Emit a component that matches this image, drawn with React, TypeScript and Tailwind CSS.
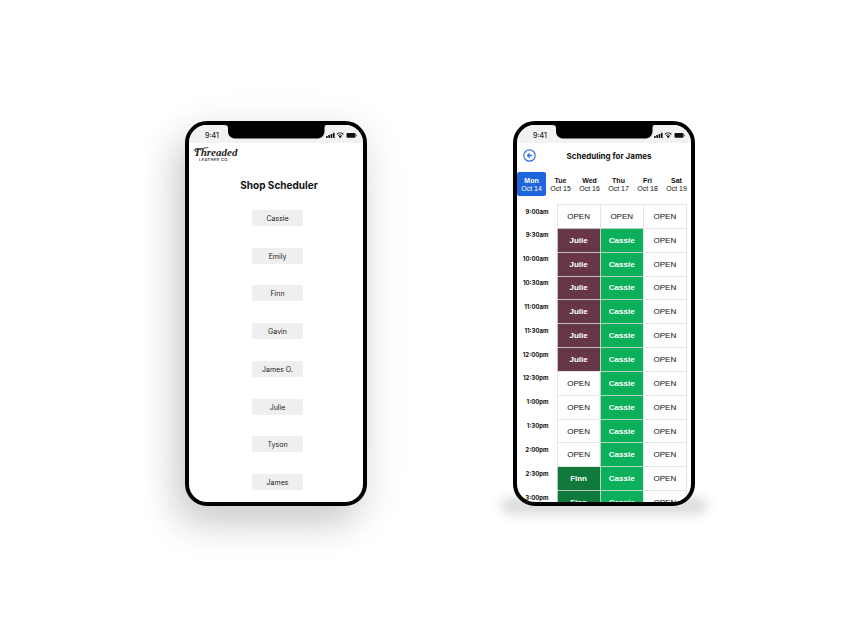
import type { ReactNode } from "react";

const staff = ["Cassie", "Emily", "Finn", "Gavin", "James O.", "Julie", "Tyson", "James"];

const days = [
  { day: "Mon", date: "Oct 14" },
  { day: "Tue", date: "Oct 15" },
  { day: "Wed", date: "Oct 16" },
  { day: "Thu", date: "Oct 17" },
  { day: "Fri", date: "Oct 18" },
  { day: "Sat", date: "Oct 19" },
];

const slots: [string, string[]][] = [
  ["9:00am", ["OPEN", "OPEN", "OPEN"]],
  ["9:30am", ["Julie", "Cassie", "OPEN"]],
  ["10:00am", ["Julie", "Cassie", "OPEN"]],
  ["10:30am", ["Julie", "Cassie", "OPEN"]],
  ["11:00am", ["Julie", "Cassie", "OPEN"]],
  ["11:30am", ["Julie", "Cassie", "OPEN"]],
  ["12:00pm", ["Julie", "Cassie", "OPEN"]],
  ["12:30pm", ["OPEN", "Cassie", "OPEN"]],
  ["1:00pm", ["OPEN", "Cassie", "OPEN"]],
  ["1:30pm", ["OPEN", "Cassie", "OPEN"]],
  ["2:00pm", ["OPEN", "Cassie", "OPEN"]],
  ["2:30pm", ["Finn", "Cassie", "OPEN"]],
  ["3:00pm", ["Finn", "Cassie", "OPEN"]],
];

const slotStyles: Record<string, string> = {
  OPEN: "text-[#111111]",
  Julie: "bg-[#673748] font-bold text-white",
  Cassie: "bg-[#0cb05a] font-bold text-white",
  Finn: "bg-[#107a3c] font-bold text-white",
};

function StatusBar() {
  return (
    <div className="relative flex h-[18px] shrink-0 items-center justify-between bg-[#f2f2f2] pt-[3px] pr-[6px] pl-4">
      <span className="text-[7px] leading-[8px] font-medium text-[#222222]">9:41</span>
      <svg className="absolute top-0 left-[35px]" width="103" height="14" viewBox="0 0 103 14" aria-hidden="true">
        <path d="M0 0H103C101 0 100.500 1 100.500 3V6C100.500 11 97 13.500 93 13.500H12C7 13.500 4 11 4 6V3C4 1 3 0 0 0Z" fill="#000" />
      </svg>
      <svg width="31" height="7" viewBox="0 0 31 7" aria-hidden="true">
        <g fill="#111">
          <rect x="0" y="4" width="1.700" height="2" rx="0.400" />
          <rect x="2.300" y="3" width="1.700" height="3" rx="0.400" />
          <rect x="4.600" y="1.900" width="1.700" height="4.100" rx="0.400" />
          <rect x="6.900" y="0.700" width="1.700" height="5.300" rx="0.400" />
          <rect x="20.500" y="1" width="9" height="4.800" rx="1" />
          <rect x="29.900" y="2.500" width="0.600" height="1.800" rx="0.300" />
          <path d="M12.700 4.500L14.200 6.200L15.700 4.500A2.200 2.200 0 0 0 12.700 4.500Z" />
        </g>
        <g fill="none" stroke="#111" strokeWidth="1.100">
          <path d="M10.900 2.300A4.900 4.900 0 0 1 17.500 2.300" />
          <path d="M12.100 3.700A3.100 3.100 0 0 1 16.300 3.700" strokeWidth="0.800" />
        </g>
      </svg>
    </div>
  );
}

function Phone({ children, className = "" }: { children: ReactNode; className?: string }) {
  return (
    <div className={`relative h-[385px] w-[182px] rounded-[22px] border-4 border-black bg-black ${className}`}>
      <div className="flex h-full flex-col overflow-hidden rounded-[18px] bg-white">
        <StatusBar />
        {children}
      </div>
    </div>
  );
}

function Logo() {
  return (
    <a href="#home" className="relative block w-[43px] text-[#1c1c1c]">
      <span className="block font-['Liberation_Serif',serif] text-[11px] leading-[12px] font-bold italic">Threaded</span>
      <svg className="absolute top-0 left-0" width="43" height="12" viewBox="0 0 43 12" fill="none" stroke="currentColor" strokeWidth="0.800" strokeLinecap="round" aria-hidden="true">
        <path d="M2.500 5.500C0 5.800 0 3 2.500 2.500H8L14 1.500" />
      </svg>
      <span className="block pl-[5px] text-[4px] leading-[4px] font-medium tracking-widest whitespace-nowrap">LEATHER CO.</span>
    </a>
  );
}

function ShopScheduler() {
  return (
    <Phone className="shadow-[-10px_18px_36px_rgba(0,0,0,0.17),0_8px_50px_rgba(0,0,0,0.07)]">
      <div className="pt-[3px] pl-[5px]">
        <Logo />
      </div>
      <h1 className="mt-4 pl-[6px] text-center text-[10px] leading-[14px] font-bold text-[#111111]">Shop Scheduler</h1>
      <div className="mt-[18px] flex flex-1 flex-col items-center justify-between pb-3 pl-[3px]">
        {staff.map((name) => (
          <button key={name} type="button" className="h-4 w-[51px] rounded-[2px] bg-[#efefef] pt-px text-[7px] leading-[16px] text-[#222222]">
            {name}
          </button>
        ))}
      </div>
    </Phone>
  );
}

function DaySchedule() {
  return (
    <Phone>
      <header className="flex h-[25px] shrink-0 items-center pl-[6px]">
        <button type="button" aria-label="Back" className="text-[#2f74e8]">
          <svg width="13" height="13" viewBox="0 0 13 13" fill="none" stroke="currentColor" strokeLinecap="round" strokeLinejoin="round">
            <circle cx="6.500" cy="6.500" r="5.700" strokeWidth="1.200" />
            <path d="M8.700 6.500H4.500M6.200 4.800L4.500 6.500L6.200 8.200" strokeWidth="1.300" />
          </svg>
        </button>
        <h2 className="flex-1 pr-4 pl-[7px] text-center text-[8px] leading-[12px] font-bold whitespace-nowrap text-[#111111]">Scheduling for James</h2>
      </header>
      <nav className="mt-1 grid shrink-0 grid-cols-6">
        {days.map(({ day, date }, i) => (
          <button
            key={day}
            type="button"
            className={`flex h-6 flex-col items-center justify-center rounded-[2px] pt-px font-['Liberation_Sans',sans-serif] text-[7px] leading-[8px] whitespace-nowrap ${i === 0 ? "bg-[#1f66dd] text-white" : "text-[#111111]"}`}
          >
            <span className="font-bold">{day}</span>
            <span>{date}</span>
          </button>
        ))}
      </nav>
      <div className="mt-2 min-h-0 flex-1 overflow-hidden pr-1">
        <table className="h-[311px] w-full table-fixed border-collapse">
          <colgroup>
            <col className="w-10" />
            <col />
            <col />
            <col />
          </colgroup>
          <tbody>
            {slots.map(([time, names]) => (
              <tr key={time}>
                <th scope="row" className="p-0 pt-[3px] pr-2 text-right align-top text-[6px] leading-[8px] font-bold text-[#111111]">
                  {time}
                </th>
                {names.map((name, i) => (
                  <td key={i} className={`border border-[#dedede]/80 p-0 pt-px text-center font-['Liberation_Sans',sans-serif] text-[8px] leading-[10px] ${slotStyles[name]}`}>
                    {name}
                  </td>
                ))}
              </tr>
            ))}
          </tbody>
        </table>
      </div>
    </Phone>
  );
}

export default function App() {
  return (
    <main className="flex min-h-screen flex-wrap items-start justify-center gap-x-[146px] gap-y-16 bg-white pt-[121px] pb-16 pl-[27px] font-['Inter',sans-serif]">
      <ShopScheduler />
      <div className="relative isolate">
        <div className="absolute -right-3 -bottom-2 -left-3 -z-10 h-4 rounded-full bg-black/15 blur-[6px]" />
        <DaySchedule />
      </div>
    </main>
  );
}
